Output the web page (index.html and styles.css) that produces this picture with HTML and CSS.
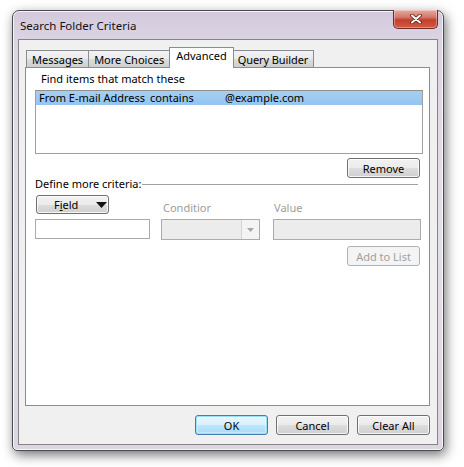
FILE: index.html
```html
<!DOCTYPE html>
<html>
<head>
<meta charset="utf-8">
<link rel="stylesheet" href="styles.css">
</head>
<body>
<div class="window">
  <div class="titlebar">
    <span class="title">Search Folder Criteria</span>
    <div class="close">
      <svg width="14" height="10" viewBox="0 0 14 10">
        <path d="M3 1.5 L11 8.5 M11 1.5 L3 8.5" stroke="#5a1e1a" stroke-width="3.6" stroke-linecap="round"/>
        <path d="M3 1.5 L11 8.5 M11 1.5 L3 8.5" stroke="#ffffff" stroke-width="2" stroke-linecap="round"/>
      </svg>
    </div>
  </div>
  <div class="client">
    <div class="tabs">
      <div class="tab">Messages</div>
      <div class="tab">More Choices</div>
      <div class="tab active">Advanced</div>
      <div class="tab qb">Query Builder</div>
    </div>
    <div class="panel">
      <div class="find-label">Find items that match these</div>
      <div class="listbox">
        <div class="row selected"><span class="c1">From E-mail Address</span><span class="c2">contains</span><span class="c3">@example.com</span></div>
      </div>
      <div class="right-row remove-row"><button class="btn">Remove</button></div>
      <div class="define"><span>Define more criteria:</span><div class="rule"></div></div>
      <div class="crit-top">
        <button class="btn field-btn"><span>F<u>i</u>eld</span><svg width="11" height="6" viewBox="0 0 11 6"><path d="M0 0 H11 L5.5 6 Z" fill="#111"/></svg></button>
        <div class="lbl cond-lbl">Conditior</div>
        <div class="lbl val-lbl">Value</div>
      </div>
      <div class="crit-inputs">
        <div class="input field-input"></div>
        <div class="combo"><div class="combo-arrow"><svg width="7" height="4" viewBox="0 0 7 4"><path d="M0 0 H7 L3.5 4 Z" fill="#a7a7a7"/></svg></div></div>
        <div class="input disabled value-input"></div>
      </div>
      <div class="right-row add-row"><button class="btn disabled-btn">Add to List</button></div>
    </div>
    <div class="footer">
      <button class="btn default">OK</button>
      <button class="btn">Cancel</button>
      <button class="btn">Clear All</button>
    </div>
  </div>
</div>
</body>
</html>
```

FILE: styles.css
```css
html, body {
  margin: 0;
  padding: 0;
  background: #ffffff;
}
body {
  width: 464px;
  height: 467px;
  padding: 10px 0 0 12px;
  box-sizing: border-box;
  font-family: "Noto Sans", "Open Sans", sans-serif;
  font-size: 11px;
  color: #000;
}
.window {
  width: 432px;
  height: 441px;
  box-sizing: border-box;
  border: 1px solid #4b4b52;
  border-radius: 7px 7px 5px 5px;
  background: linear-gradient(180deg, #d3c9dc 0%, #ddd5e4 8%, #e4e0ea 50%, #ddd6e2 100%);
  box-shadow: 2px 4px 12px rgba(0,0,0,0.55), inset 0 0 0 1px rgba(255,255,255,0.75);
  padding: 0 5px 5px 5px;
  display: flex;
  flex-direction: column;
}
.titlebar {
  height: 28px;
  display: flex;
  align-items: flex-start;
  justify-content: space-between;
  flex: none;
}
.title {
  margin-top: 7px;
  margin-left: 2px;
  font-size: 11.5px;
  color: #111;
}
.close {
  width: 45px;
  height: 19px;
  box-sizing: border-box;
  margin-top: -1px;
  border: 1px solid #6f2a24;
  border-top: none;
  border-radius: 0 0 5px 5px;
  background: linear-gradient(180deg, #e9a99c 0%, #d5776a 40%, #c4402d 55%, #cf5a43 100%);
  box-shadow: inset 0 0 0 1px rgba(255,255,255,0.35);
  display: flex;
  align-items: center;
  justify-content: center;
}
.client {
  flex: 1;
  background: #f0f0f0;
  border: 1px solid #858585;
  display: flex;
  flex-direction: column;
  padding: 7px 7px 9px 6px;
}
.tabs {
  display: flex;
  align-items: flex-end;
  height: 20px;
  padding-left: 1px;
  position: relative;
  z-index: 1;
}
.tab {
  height: 17px;
  box-sizing: border-box;
  border: 1px solid #898c95;
  border-bottom: none;
  margin-right: -1px;
  padding: 0 5px;
  background: linear-gradient(180deg, #f2f2f2 0%, #ebebeb 50%, #dddddd 51%, #cfcfcf 100%);
  line-height: 17px;
  color: #000;
}
.tab.qb { padding: 0 5px 0 4px; letter-spacing: -0.1px; }
.tab.active {
  background: #ffffff;
  padding: 0 6px;
  line-height: 16px;
  margin-bottom: -1px;
  height: 21px;
  position: relative;
  z-index: 2;
}
.panel {
  height: 339px;
  box-sizing: border-box;
  background: #ffffff;
  border: 1px solid #898c95;
  display: flex;
  flex-direction: column;
}
.find-label {
  margin: 2px 0 0 15px;
  height: 17px;
  line-height: 17px;
}
.listbox {
  margin: 3px 0 0 9px;
  width: 388px;
  height: 64px;
  box-sizing: border-box;
  border: 1px solid #a0a0a0;
  border-top-color: #8e8f8f;
  background: #fff;
}
.row {
  height: 14px;
  line-height: 14px;
  display: flex;
  padding-left: 3px;
  white-space: nowrap;
}
.row.selected {
  background: linear-gradient(180deg, #a4cff3, #94c5f0);
}
.row .c1 { width: 111px; }
.row .c2 { width: 75px; }
.btn {
  font-family: inherit;
  font-size: 11px;
  color: #000;
  width: 73px;
  height: 20px;
  box-sizing: border-box;
  padding: 0;
  border: 1px solid #707070;
  border-radius: 3px;
  background: linear-gradient(180deg, #f2f2f2 0%, #ebebeb 50%, #dddddd 51%, #cfcfcf 100%);
  box-shadow: inset 0 0 0 1px rgba(255,255,255,0.8);
  line-height: 17px;
}
.right-row {
  display: flex;
  justify-content: flex-end;
  padding-right: 9px;
}
.remove-row {
  margin-top: 4px;
}
.define {
  display: flex;
  align-items: center;
  margin: 0 0 0 9px;
  height: 11px;
}
.define span { white-space: nowrap; }
.rule {
  flex: 1;
  height: 0;
  border-top: 1px solid #a0a0a0;
  margin: 1px 11px 0 1px;
}
.crit-top {
  display: flex;
  align-items: flex-end;
  height: 24px;
  margin-top: 6px;
}
.field-btn {
  align-self: flex-start;
  margin-left: 10px;
  width: 73px;
  height: 19px;
  display: flex;
  align-items: center;
  padding: 0 0 0 17px;
}
.field-btn span { width: 42px; text-align: left; }
.field-btn svg { margin-top: 1px; }
.lbl {
  color: #9d9d9d;
  line-height: 14px;
  margin-bottom: 4px;
}
.cond-lbl { margin-left: 54px; width: 111px; }
.crit-inputs {
  display: flex;
  height: 21px;
}
.input {
  box-sizing: border-box;
  height: 20px;
  border: 1px solid #abadb3;
  background: #fff;
}
.field-input { margin-left: 9px; width: 115px; height: 20px; border-color: #a9abb1; }
.combo {
  margin-left: 11px;
  width: 99px;
  height: 21px;
  box-sizing: border-box;
  border: 1px solid #acacac;
  background: #ececec;
  display: flex;
  justify-content: flex-end;
}
.combo-arrow {
  width: 17px;
  border-left: 1px solid #d4d4d4;
  background: #f4f4f4;
  display: flex;
  align-items: center;
  justify-content: center;
}
.value-input {
  margin-left: 13px;
  width: 148px;
  height: 21px;
  border-color: #acacac;
  background: #ececec;
}
.add-row { margin-top: 6px; }
.disabled-btn {
  color: #a0a0a0;
  border-color: #adb2b5;
  background: #f4f4f4;
  box-shadow: none;
}
.footer {
  display: flex;
  justify-content: flex-end;
  gap: 8px;
  margin-top: 9px;
}
.footer .btn { width: 73px; height: 20px; }
.btn.default {
  border-color: #3c7fb1;
  background: linear-gradient(180deg, #eaf6fd 0%, #d9f0fc 50%, #bee6fd 51%, #a7d9f5 100%);
  box-shadow: inset 0 0 0 1px #9be0f6, inset 0 0 0 2px rgba(255,255,255,0.3);
}
```
